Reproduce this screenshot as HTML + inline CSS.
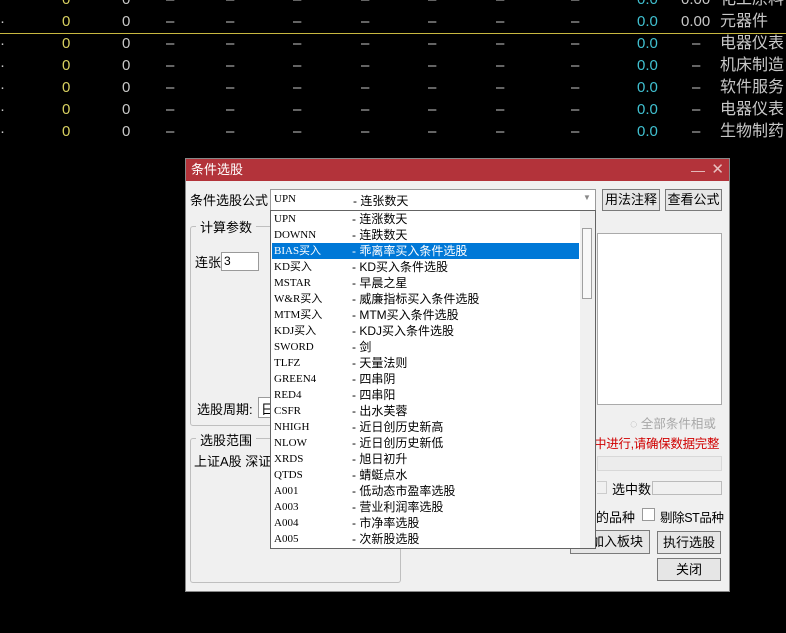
<!DOCTYPE html>
<html><head><meta charset="utf-8"><style>
*{margin:0;padding:0;box-sizing:border-box}
body{width:786px;height:633px;background:#000;position:relative;overflow:hidden;font-family:"Liberation Sans","Noto Sans CJK SC",sans-serif;font-size:12px}
.a{position:absolute;white-space:nowrap}
.r{position:absolute;left:0;width:786px;height:22px;font-family:"Liberation Sans","Noto Sans CJK SC",sans-serif;font-size:15px;line-height:22px}
.r span{position:absolute}
.y{color:#d8d060}.w{color:#c8c8c8}.c{color:#40c0d0}
.dlg{position:absolute;left:185px;top:158px;width:545px;height:434px;background:#f0f0f0;border:1px solid #888}
.tb{position:absolute;left:0;top:0;width:543px;height:22px;background:#b3333a;color:#fff;font-size:13px;line-height:22px;padding-left:5px}
.btn{position:absolute;background:#e6e6e6;border:1px solid #7a7a7a;text-align:center;font-size:13px;color:#000}
.grp{position:absolute;border:1px solid #bfbfbf;border-radius:3px}
.lbl{position:absolute;background:#f0f0f0;padding:0 4px;font-size:13px}
.inp{position:absolute;background:#fff;border:1px solid #9a9a9a}
.list{position:absolute;left:270px;top:210px;width:326px;height:339px;background:#fff;border:1px solid #646464}
.it{position:absolute;left:1px;width:307px;height:16px;line-height:16px;font-size:12px;color:#000}
.it .k{position:absolute;left:2px;font-family:"Liberation Serif","Noto Sans CJK SC",serif;font-size:11px}
.it .v{position:absolute;left:80px}
.sel{background:#0078d7;color:#fff}
</style></head><body>
<div class="r" style="top:-11px"><span class="y" style="left:62px">0</span><span class="w" style="left:122px">0</span><span class="w" style="left:166px">–</span><span class="w" style="left:226px">–</span><span class="w" style="left:293px">–</span><span class="w" style="left:361px">–</span><span class="w" style="left:428px">–</span><span class="w" style="left:496px">–</span><span class="w" style="left:571px">–</span><span class="c" style="left:637px">0.0</span><span class="w" style="left:681px">0.00</span><span class="w" style="left:720px;font-size:16px">化工原料</span></div>
<div class="r" style="top:11px"><span class="w" style="left:0">·</span><span class="y" style="left:62px">0</span><span class="w" style="left:122px">0</span><span class="w" style="left:166px">–</span><span class="w" style="left:226px">–</span><span class="w" style="left:293px">–</span><span class="w" style="left:361px">–</span><span class="w" style="left:428px">–</span><span class="w" style="left:496px">–</span><span class="w" style="left:571px">–</span><span class="c" style="left:637px">0.0</span><span class="w" style="left:681px">0.00</span><span class="w" style="left:720px;font-size:16px">元器件</span></div>
<div class="a" style="left:0;top:33px;width:786px;height:1px;background:#c8b840"></div>
<div class="r" style="top:33px"><span class="w" style="left:0">·</span><span class="y" style="left:62px">0</span><span class="w" style="left:122px">0</span><span class="w" style="left:166px">–</span><span class="w" style="left:226px">–</span><span class="w" style="left:293px">–</span><span class="w" style="left:361px">–</span><span class="w" style="left:428px">–</span><span class="w" style="left:496px">–</span><span class="w" style="left:571px">–</span><span class="c" style="left:637px">0.0</span><span class="w" style="left:692px">–</span><span class="w" style="left:720px;font-size:16px">电器仪表</span></div>
<div class="r" style="top:55px"><span class="w" style="left:0">·</span><span class="y" style="left:62px">0</span><span class="w" style="left:122px">0</span><span class="w" style="left:166px">–</span><span class="w" style="left:226px">–</span><span class="w" style="left:293px">–</span><span class="w" style="left:361px">–</span><span class="w" style="left:428px">–</span><span class="w" style="left:496px">–</span><span class="w" style="left:571px">–</span><span class="c" style="left:637px">0.0</span><span class="w" style="left:692px">–</span><span class="w" style="left:720px;font-size:16px">机床制造</span></div>
<div class="r" style="top:77px"><span class="w" style="left:0">·</span><span class="y" style="left:62px">0</span><span class="w" style="left:122px">0</span><span class="w" style="left:166px">–</span><span class="w" style="left:226px">–</span><span class="w" style="left:293px">–</span><span class="w" style="left:361px">–</span><span class="w" style="left:428px">–</span><span class="w" style="left:496px">–</span><span class="w" style="left:571px">–</span><span class="c" style="left:637px">0.0</span><span class="w" style="left:692px">–</span><span class="w" style="left:720px;font-size:16px">软件服务</span></div>
<div class="r" style="top:99px"><span class="w" style="left:0">·</span><span class="y" style="left:62px">0</span><span class="w" style="left:122px">0</span><span class="w" style="left:166px">–</span><span class="w" style="left:226px">–</span><span class="w" style="left:293px">–</span><span class="w" style="left:361px">–</span><span class="w" style="left:428px">–</span><span class="w" style="left:496px">–</span><span class="w" style="left:571px">–</span><span class="c" style="left:637px">0.0</span><span class="w" style="left:692px">–</span><span class="w" style="left:720px;font-size:16px">电器仪表</span></div>
<div class="r" style="top:121px"><span class="w" style="left:0">·</span><span class="y" style="left:62px">0</span><span class="w" style="left:122px">0</span><span class="w" style="left:166px">–</span><span class="w" style="left:226px">–</span><span class="w" style="left:293px">–</span><span class="w" style="left:361px">–</span><span class="w" style="left:428px">–</span><span class="w" style="left:496px">–</span><span class="w" style="left:571px">–</span><span class="c" style="left:637px">0.0</span><span class="w" style="left:692px">–</span><span class="w" style="left:720px;font-size:16px">生物制药</span></div>

<div class="dlg">
<div class="tb">条件选股<span style="position:absolute;right:24px;top:0;font-size:14px;color:#e8c0c0">—</span><span style="position:absolute;right:5px;top:0;font-size:15px;color:#e8c0c0">✕</span></div>
</div>
<div class="a" style="left:190px;top:190px;font-size:13px">条件选股公式</div>
<div class="inp" style="left:270px;top:189px;width:326px;height:22px"><span class="a" style="left:3px;top:3px;font-family:'Liberation Serif',serif;font-size:11px">UPN</span><span class="a" style="left:82px;top:2px;font-size:12px">- 连张数天</span><span class="a" style="left:312px;top:3px;font-size:8px;color:#888">▼</span></div>
<div class="btn" style="left:602px;top:189px;width:58px;height:22px;line-height:20px">用法注释</div>
<div class="btn" style="left:665px;top:189px;width:57px;height:22px;line-height:20px">查看公式</div>

<div class="grp" style="left:190px;top:226px;width:211px;height:200px"></div>
<div class="lbl" style="left:196px;top:217px">计算参数</div>
<div class="a" style="left:195px;top:252px;font-size:13px">连张</div>
<div class="inp" style="left:221px;top:252px;width:38px;height:19px"><span class="a" style="left:2px;top:1px">3</span></div>
<div class="a" style="left:197px;top:399px;font-size:13px">选股周期:</div>
<div class="inp" style="left:258px;top:397px;width:20px;height:21px"><span class="a" style="left:2px;top:1px;font-size:13px">日</span></div>

<div class="grp" style="left:190px;top:438px;width:211px;height:145px"></div>
<div class="lbl" style="left:196px;top:430px">选股范围</div>
<div class="a" style="left:194px;top:451px;font-size:13px">上证A股 深证</div>

<div class="inp" style="left:597px;top:233px;width:125px;height:172px;border-color:#aaa"></div>
<div class="a" style="left:630px;top:413px;font-size:12.5px;color:#a8a8a8">◌ 全部条件相或</div>
<div class="a" style="left:594px;top:433px;font-size:12.5px;color:#d00000;letter-spacing:-0.3px">中进行,请确保数据完整</div>
<div class="a" style="left:597px;top:456px;width:125px;height:15px;border:1px solid #d8d8d8;background:#ececec"></div>
<div class="a" style="left:597px;top:481px;width:10px;height:13px;border:1px solid #ccc;border-left:none"></div>
<div class="a" style="left:612px;top:479px;font-size:13px">选中数</div>
<div class="a" style="left:652px;top:481px;width:70px;height:14px;border:1px solid #bbb;background:#f0f0f0"></div>
<div class="a" style="left:596px;top:507px;font-size:13px">的品种</div>
<div class="a" style="left:642px;top:508px;width:13px;height:13px;border:1px solid #999;background:#fff"></div>
<div class="a" style="left:660px;top:507px;font-size:12.5px;letter-spacing:-0.4px">剔除ST品种</div>
<div class="btn" style="left:570px;top:530px;width:80px;height:24px;line-height:22px;text-align:right;padding-right:6px">加入板块</div>
<div class="btn" style="left:657px;top:531px;width:64px;height:23px;line-height:21px">执行选股</div>
<div class="btn" style="left:657px;top:558px;width:64px;height:23px;line-height:21px">关闭</div>

<div class="list">
<div class="it" style="top:0"><span class="k">UPN</span><span class="v">- 连涨数天</span></div>
<div class="it" style="top:16px"><span class="k">DOWNN</span><span class="v">- 连跌数天</span></div>
<div class="it sel" style="top:32px"><span class="k">BIAS买入</span><span class="v">- 乖离率买入条件选股</span></div>
<div class="it" style="top:48px"><span class="k">KD买入</span><span class="v">- KD买入条件选股</span></div>
<div class="it" style="top:64px"><span class="k">MSTAR</span><span class="v">- 早晨之星</span></div>
<div class="it" style="top:80px"><span class="k">W&amp;R买入</span><span class="v">- 威廉指标买入条件选股</span></div>
<div class="it" style="top:96px"><span class="k">MTM买入</span><span class="v">- MTM买入条件选股</span></div>
<div class="it" style="top:112px"><span class="k">KDJ买入</span><span class="v">- KDJ买入条件选股</span></div>
<div class="it" style="top:128px"><span class="k">SWORD</span><span class="v">- 剑</span></div>
<div class="it" style="top:144px"><span class="k">TLFZ</span><span class="v">- 天量法则</span></div>
<div class="it" style="top:160px"><span class="k">GREEN4</span><span class="v">- 四串阴</span></div>
<div class="it" style="top:176px"><span class="k">RED4</span><span class="v">- 四串阳</span></div>
<div class="it" style="top:192px"><span class="k">CSFR</span><span class="v">- 出水芙蓉</span></div>
<div class="it" style="top:208px"><span class="k">NHIGH</span><span class="v">- 近日创历史新高</span></div>
<div class="it" style="top:224px"><span class="k">NLOW</span><span class="v">- 近日创历史新低</span></div>
<div class="it" style="top:240px"><span class="k">XRDS</span><span class="v">- 旭日初升</span></div>
<div class="it" style="top:256px"><span class="k">QTDS</span><span class="v">- 蜻蜓点水</span></div>
<div class="it" style="top:272px"><span class="k">A001</span><span class="v">- 低动态市盈率选股</span></div>
<div class="it" style="top:288px"><span class="k">A003</span><span class="v">- 营业利润率选股</span></div>
<div class="it" style="top:304px"><span class="k">A004</span><span class="v">- 市净率选股</span></div>
<div class="it" style="top:320px"><span class="k">A005</span><span class="v">- 次新股选股</span></div>
<div class="a" style="left:309px;top:0;width:15px;height:337px;background:#f0f0f0"></div>
<div class="a" style="left:311px;top:17px;width:10px;height:71px;border:1px solid #a0a0a0;background:#f8f8f8"></div>
</div>
</body></html>
